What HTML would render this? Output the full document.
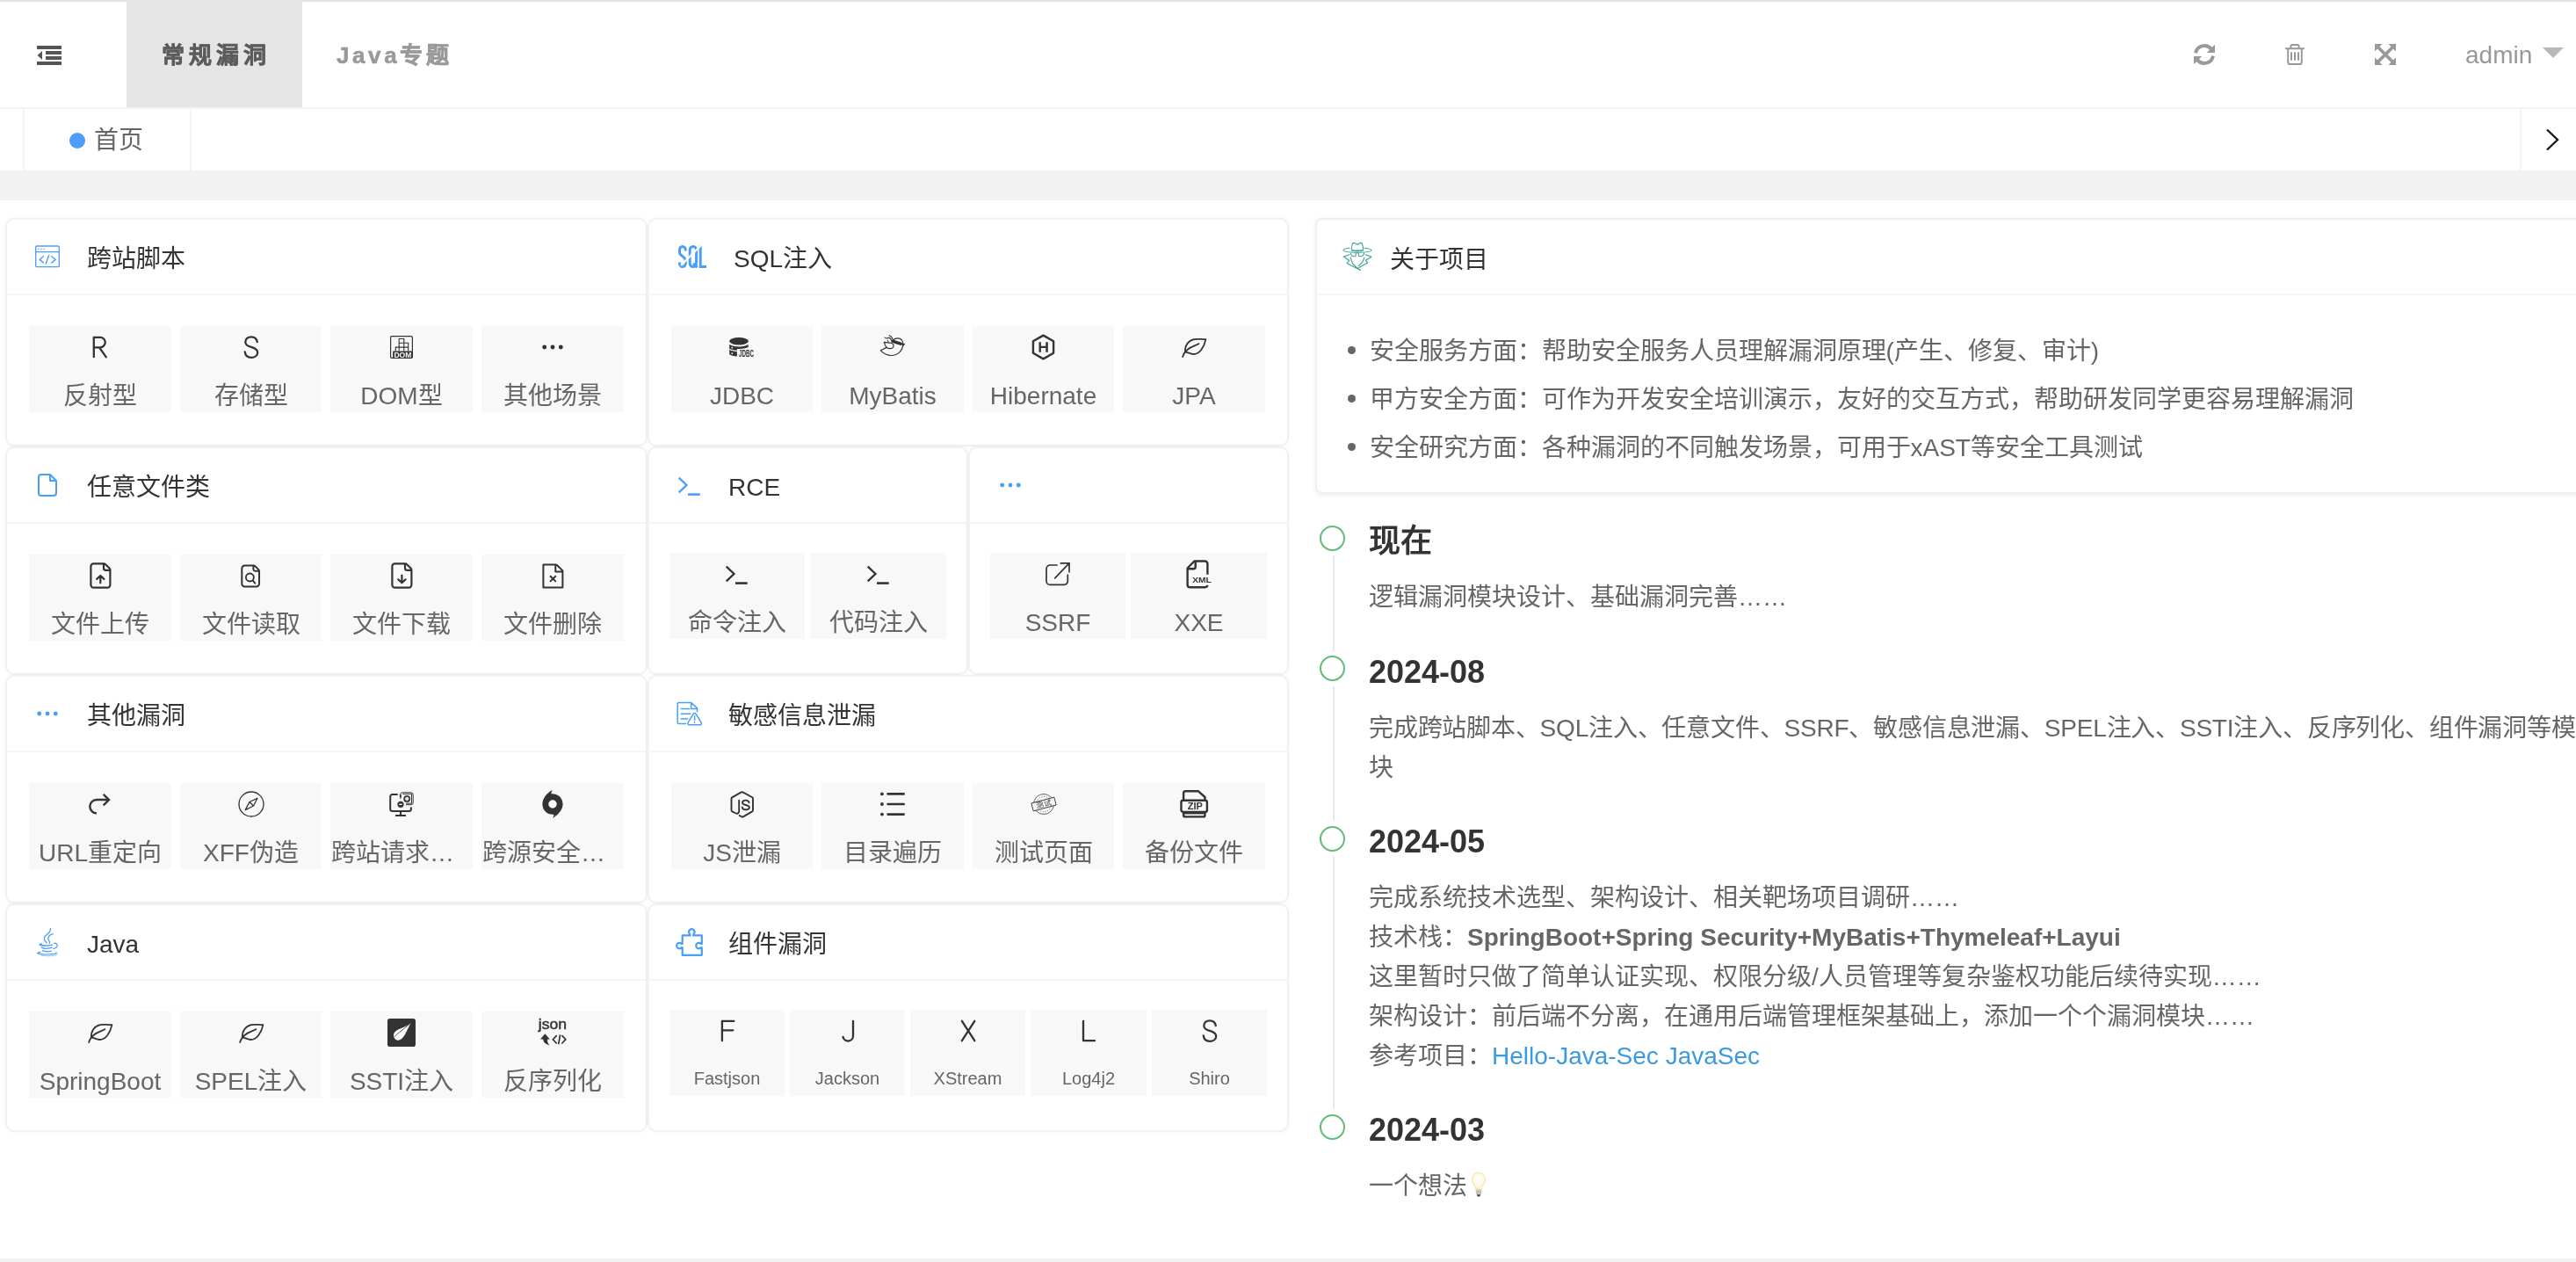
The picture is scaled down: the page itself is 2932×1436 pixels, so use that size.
<!DOCTYPE html>
<html lang="zh-CN">
<head>
<meta charset="utf-8">
<title>首页</title>
<style>
*{box-sizing:border-box;margin:0;padding:0}
html,body{width:2932px;height:1436px;overflow:hidden;background:#fff}
body{position:relative;font-family:"Liberation Sans",sans-serif;color:#666;font-size:28px;line-height:44.8px;-webkit-font-smoothing:antialiased}
#pg{position:absolute;left:0;top:0;width:2932px;height:1436px;overflow:hidden;will-change:transform}
.abs{position:absolute}
.ic{position:absolute;display:block;overflow:visible;fill:none;stroke:none}
.topline{left:0;top:0;width:2932px;height:2px;background:#e3e3e3}
.hdr{left:0;top:2px;width:2932px;height:120px;background:#fff}
.hdrline{left:0;top:122px;width:2932px;height:2px;background:#f4f4f4}
.navthis{left:144px;top:2px;width:200px;height:120px;background:#e5e5e5}
.nav{top:2px;height:120px;line-height:120px;font-size:26px;font-weight:bold;letter-spacing:4px;white-space:nowrap;-webkit-text-stroke:.55px currentColor}
.tabbar{left:0;top:124px;width:2932px;height:70px;background:#fff}
.vline{top:124px;width:2px;height:70px;background:#f4f4f4}
.band{left:0;top:194px;width:2932px;height:34px;background:#f2f2f2}
.foot{left:0;top:1432px;width:2932px;height:4px;background:#f2f2f2}
.card{position:absolute;background:#fff;border:2px solid #f1f1f1;border-radius:10px;box-shadow:0 0 6px rgba(0,0,0,.035)}
.card .hl{position:absolute;left:0;right:0;top:84px;height:2px;background:#f5f5f5}
.ttl{position:absolute;font-size:28px;line-height:44px;color:#333;white-space:nowrap}
.it{position:absolute;height:98px;background:#f8f8f8}
.lb{position:absolute;left:0;right:0;top:57.5px;height:44px;line-height:44px;text-align:center;font-size:28px;color:#666;white-space:nowrap;overflow:hidden}
.lb.sm{font-size:20px;top:55.5px}
.lb.l{text-align:left;padding-left:1px}
.ch{position:absolute;left:0;right:0;top:2px;height:44px;line-height:44px;text-align:center;font-size:34px;color:#333}
.about{left:1496.5px;top:248px;width:1500px;height:313.5px;border-radius:8px;border-color:#efefef;box-shadow:0 2px 7px rgba(0,0,0,.065)}
.li{position:absolute;left:1558.5px;height:54px;line-height:54px;font-size:28px;color:#666;white-space:nowrap}
.dot{position:absolute;left:1534px;width:9px;height:9px;border-radius:50%;background:#666}
.tl{position:absolute;left:1508px;top:592px;width:1500px}
.ti{position:relative;padding-bottom:40px}
.ti:before{content:"";position:absolute;left:9px;top:0;width:2px;height:100%;background:#e9e9e9}
.ti.last:before{display:none}
.ax{position:absolute;left:-11.5px;top:0;width:40px;height:40px;background:#fff}
.ax i{position:absolute;left:5.5px;top:5.5px;width:29px;height:29px;border:2px solid #62bb79;border-radius:50%}
.tc{padding-left:50px}
.tc h3{position:relative;top:2px;font-size:36px;line-height:44px;margin-bottom:20px;color:#333;font-weight:bold;white-space:nowrap}
.tc p{position:relative;top:2px;font-size:28px;line-height:44.8px;color:#666;white-space:nowrap}
.tc a{color:#3a9ae0;text-decoration:none}
.tc b{font-weight:bold}
</style>
</head>
<body>
<div id="pg">

<div class="abs topline"></div><div class="abs hdr"></div><div class="abs navthis"></div><div class="abs hdrline"></div>
<svg class="ic" style="left:42px;top:52px;width:28px;height:22px" viewBox="0 0 28 22"><path fill="#555" d="M0 0h28v4H0zM10 6h18v4H10zM10 12h18v4H10zM0 18h28v4H0zM0.6 11L6 6v10z"/></svg>
<div class="abs nav" style="left:184px;top:3px;letter-spacing:5px;color:#5c5c5c">常规漏洞</div>
<div class="abs nav" style="left:383px;top:3px;color:#999;letter-spacing:3.6px">Java专题</div>
<svg class="ic" style="left:2497.00px;top:50.00px;width:24.00px;height:24.00px;color:#999;" viewBox="0 0 24 24"><path fill="none" stroke="currentColor" stroke-width="4" d="M2.1 10.4A10 10 0 0 1 19.8 5.8"/><path fill="currentColor" stroke="none" d="M24 .8V10H14.8z"/><path fill="none" stroke="currentColor" stroke-width="4" d="M21.9 13.6A10 10 0 0 1 4.2 18.2"/><path fill="currentColor" stroke="none" d="M0 23.2V14H9.2z"/></svg>
<svg class="ic" style="left:2601.00px;top:50.00px;width:22.00px;height:24.00px;color:#999;" viewBox="0 0 22 24"><path fill="none" stroke="currentColor" stroke-width="2" d="M0 5.2H22M6.4 5V2.6Q6.4 1 8 1H14Q15.6 1 15.6 2.6V5M3.2 5.4V20.4Q3.2 23 5.8 23H16.2Q18.8 23 18.8 20.4V5.4M7 9.2V18.8M11 9.2V18.8M15 9.2V18.8"/></svg>
<svg class="ic" style="left:2703.00px;top:50.00px;width:24.00px;height:24.00px;color:#999;" viewBox="0 0 24 24"><path fill="currentColor" stroke="none" d="M0 0H8.6L0 8.6zM24 0V8.6L15.4 0zM0 24V15.4L8.6 24zM24 24H15.4L24 15.4z"/><path fill="none" stroke="currentColor" stroke-width="3.8" d="M3 3L21 21M21 3L3 21"/></svg>
<div class="abs" style="left:2806px;top:41px;height:44px;line-height:44px;font-size:28px;color:#999">admin</div>
<svg class="ic" style="left:2894px;top:54px;width:24px;height:12px" viewBox="0 0 24 12"><path fill="#b8b8b8" d="M0 0h24L12 12z"/></svg>
<div class="abs tabbar"></div><div class="abs vline" style="left:26px"></div><div class="abs vline" style="left:216px"></div><div class="abs vline" style="left:2868px"></div>
<div class="abs" style="left:79px;top:151px;width:18px;height:18px;border-radius:50%;background:#4a9ef7"></div>
<div class="abs" style="left:107px;top:138px;height:44px;line-height:44px;font-size:28px;color:#666;white-space:nowrap">首页</div>
<svg class="ic" style="left:2896px;top:146px;width:18px;height:26px" viewBox="0 0 18 26"><path d="M3 1.5L15 13L3 24.5" stroke="#1a1a1a" stroke-width="2.4" fill="none"/></svg>
<div class="abs band"></div><div class="abs foot"></div>
<div class="card" style="left:6px;top:248px;width:731px;height:260px"><div class="hl"></div></div>
<svg class="ic" style="left:40.00px;top:279.00px;width:28.00px;height:26.00px;color:#4a9ef7;" viewBox="0 0 28 26"><rect x=".7" y="1" width="26.6" height="23.6" rx="1.2" fill="none" stroke="currentColor" stroke-width="1.3"/><path fill="none" stroke="currentColor" stroke-width="1.3" d="M.7 7.7H27.3M3 4.4H4.4M6.2 4.4H7.6M9.4 4.4H10.8"/><path fill="none" stroke="currentColor" stroke-width="1.4" d="M9.8 12.2L5.2 16.4L9.8 20.4M15.9 11L11.9 21.7M18.3 12.2L23.1 16.4L18.3 20.4"/></svg>
<div class="ttl" style="left:99px;top:273px">跨站脚本</div>
<div class="it" style="left:33px;top:371px;width:162px">
<div class="lb">反射型</div></div>
<svg class="ic" style="left:105.00px;top:382.00px;width:18.00px;height:26.00px;color:#333;" viewBox="0 0 18 26"><path fill="none" stroke="currentColor" stroke-width="2.3" stroke-linecap="round" stroke-linejoin="round" d="M1.8 24.2V1.8H9A5.75 5.75 0 0 1 9 13.3H1.8M8.2 13.5L15.8 24.3"/></svg>
<div class="it" style="left:205px;top:371px;width:161px">
<div class="lb">存储型</div></div>
<svg class="ic" style="left:276.50px;top:382.00px;width:18.00px;height:26.00px;color:#333;" viewBox="0 0 18 26"><path fill="none" stroke="currentColor" stroke-width="2.3" stroke-linecap="round" stroke-linejoin="round" d="M15.8 7C15.2 3.5 12.7 1.3 9 1.3C5 1.3 2.3 3.8 2.3 7.2C2.3 10.5 5 11.8 8.8 12.9C13 14.1 16.2 15.3 16.2 18.9C16.2 22.5 13 24.8 9 24.8C5 24.8 2.2 22.3 1.8 18.3"/></svg>
<div class="it" style="left:376px;top:371px;width:162px">
<div class="lb">DOM型</div></div>
<svg class="ic" style="left:444.00px;top:382.00px;width:26.00px;height:26.00px;color:#333;" viewBox="0 0 26 26"><rect x=".6" y=".6" width="24.8" height="24.8" rx="1.3" fill="none" stroke="currentColor" stroke-width="1.2"/><path fill="currentColor" stroke="none" d="M3.2 17.5H25.4V25.4H3.2z"/><path fill="none" stroke="currentColor" stroke-width="1.1" d="M10.2 8.2V3.5H15.75V8.2M10.2 8.2H20.7V17.5M10.2 8.2V17.5M15.75 8.2V17.5M6.25 17.5V13.15H20.7"/><text x="14.4" y="24.7" text-anchor="middle" font-family="Liberation Sans,sans-serif" font-weight="bold" font-size="9.2" fill="#f8f8f8" textLength="20" lengthAdjust="spacingAndGlyphs">DOM</text></svg>
<div class="it" style="left:548px;top:371px;width:162px">
<div class="lb">其他场景</div></div>
<svg class="ic" style="left:617.00px;top:392.00px;width:24.00px;height:6.00px;color:#333;" viewBox="0 0 24 6"><circle cx="2.7" cy="3" r="2.45" fill="currentColor" stroke="none"/><circle cx="12" cy="3" r="2.45" fill="currentColor" stroke="none"/><circle cx="21.3" cy="3" r="2.45" fill="currentColor" stroke="none"/></svg>
<div class="card" style="left:737px;top:248px;width:730px;height:260px"><div class="hl"></div></div>
<svg class="ic" style="left:772.00px;top:279.00px;width:32.00px;height:26.00px;color:#4a9ef7;" viewBox="0 0 32 26"><path fill="none" stroke="currentColor" stroke-width="3" d="M8.3 6.6V5.2A3.4 3.7 0 0 0 1.5 5.2V8.2C1.5 12.2 8.3 13 8.3 17.6V20.8A3.4 3.7 0 0 1 1.5 20.8V19.4"/><path fill="none" stroke="currentColor" stroke-width="3" d="M13.2 5.3A3.7 3.8 0 0 1 20.6 5.3V20.7A3.7 3.8 0 0 1 13.2 20.7ZM17.2 20.6L21.6 25.2"/><path fill="none" stroke="currentColor" stroke-width="3" d="M25.2 0V24.4H32"/><path stroke="#fff" stroke-width="2.2" fill="none" d="M28.1 -2L3.1 23"/></svg>
<div class="ttl" style="left:835px;top:273px">SQL注入</div>
<div class="it" style="left:764px;top:371px;width:161px">
<div class="lb">JDBC</div></div>
<svg class="ic" style="left:830.30px;top:384.00px;width:28.40px;height:22.00px;color:#333;" viewBox="0 0 28.4 22"><ellipse cx="11" cy="4.2" rx="10.8" ry="4.2" fill="currentColor" stroke="none"/><path fill="currentColor" stroke="none" d="M.2 7.6C3 11.4 19 11.4 21.7 7.4V11C19.5 12.2 14 13 8.9 13.1V14.8C5 14.4 2 13.7 .2 12.7z"/><path fill="currentColor" stroke="none" d="M.2 14.1C2 15.2 5 15.9 8.9 16.3V21.6C5 21.2 2 20.3 .2 19.2z"/><rect x="2.5" y="10.8" width="1.6" height="1.6" fill="#f8f8f8"/><rect x="2.5" y="17.3" width="1.6" height="1.6" fill="#f8f8f8"/><text x="11" y="21.6" font-family="Liberation Sans,sans-serif" font-size="10.6" font-weight="bold" fill="currentColor" textLength="17.2" lengthAdjust="spacingAndGlyphs">JDBC</text></svg>
<div class="it" style="left:935px;top:371px;width:162px">
<div class="lb">MyBatis</div></div>
<svg class="ic" style="left:1002.00px;top:381.00px;width:28.00px;height:24.00px;color:#333;" viewBox="0 0 28 24"><path fill="none" stroke="currentColor" stroke-width="1.2" stroke-linejoin="round" stroke-linecap="round" d="M7.2 14.4L.4 17.8C3 20.5 7.5 23.4 12.5 23.5C20 23.5 25.8 17.5 25.8 10.2C25.8 6.5 23.5 3.8 20.1 3.8C17.5 3.8 15.5 4.8 14.4 6"/><path fill="none" stroke="currentColor" stroke-width="1.2" stroke-linejoin="round" stroke-linecap="round" d="M4.15 8.3C6 8.6 10 8.7 12.9 9.5C15 10.3 15.6 12.3 14.6 14.2C13.5 16 9.5 16 7.2 14.4C5.6 12.6 4.8 10.5 4.15 8.3Z"/><path fill="currentColor" stroke="none" d="M12.1 6.4L14.4 5.6L24.3 8.7L25.8 11L23.5 11.9L17.5 10.2L12.5 8.4z"/><path fill="none" stroke="currentColor" stroke-width="1.1" stroke-linecap="round" d="M10.2 .7C11 1.6 12.3 1.6 12.8 2.6C13.4 3.6 13.6 4.4 14 5.2M5.1 3C6 4 7.5 4.2 8.6 3.6C9.8 3.2 11 3.6 11.6 4.6C12 5.2 12.3 5.6 12.6 6M8.3 6.2C8.5 6.8 8.8 7.4 9.1 8M25.8 10.2L27.4 10.4L26.2 12.1"/></svg>
<div class="it" style="left:1107px;top:371px;width:161px">
<div class="lb">Hibernate</div></div>
<svg class="ic" style="left:1174.00px;top:380.00px;width:27.00px;height:30.00px;color:#333;" viewBox="0 0 27 30"><path fill="none" stroke="currentColor" stroke-width="2.4" stroke-linejoin="round" d="M13.5 1.6L25.1 8.2V21.8L13.5 28.4L1.9 21.8V8.2Z"/><path fill="currentColor" stroke="none" d="M8.5 9.25H10.9V13.8H16.3V9.25H18.8V20.85H16.3V16.1H10.9V20.85H8.5z"/></svg>
<div class="it" style="left:1278px;top:371px;width:162px">
<div class="lb">JPA</div></div>
<svg class="ic" style="left:1345.00px;top:385.00px;width:28.00px;height:22.00px;color:#333;" viewBox="0 0 28 22"><path fill="none" stroke="currentColor" stroke-width="1.8" stroke-linejoin="round" d="M27.4 1.1C22.5 1.3 18.5 .2 14 1.2C7.2 2.9 3.4 8.5 4 15.4C7 15.9 10 17.6 13.3 18C20.3 18 25.6 10.2 27.4 1.1Z"/><path fill="none" stroke="currentColor" stroke-width="1.8" d="M1 21.8C1.9 17.6 4.3 14.6 7 12.5C12 8.6 16 8.5 20 5.7"/></svg>
<div class="card" style="left:6px;top:508px;width:731px;height:260px"><div class="hl"></div></div>
<svg class="ic" style="left:43.00px;top:539.00px;width:22.00px;height:26.00px;color:#4a9ef7;" viewBox="0 0 22 26"><path fill="none" stroke="currentColor" stroke-width="2" stroke-linejoin="round" stroke-linecap="round" d="M14 1H4a3 3 0 0 0 -3 3V22a3 3 0 0 0 3 3H18a3 3 0 0 0 3 -3V8L14 1V8H21"/></svg>
<div class="ttl" style="left:99px;top:533px">任意文件类</div>
<div class="it" style="left:33px;top:631px;width:162px">
<div class="lb">文件上传</div></div>
<svg class="ic" style="left:101.50px;top:640.00px;width:25.00px;height:30.00px;color:#333;" viewBox="0 0 25 30"><path fill="none" stroke="currentColor" stroke-width="2.2" stroke-linejoin="round" stroke-linecap="round" d="M16 1.3H4.4a3 3 0 0 0 -3 3V25.6a3 3 0 0 0 3 3H20.4a3 3 0 0 0 3 -3V8.6a3 3 0 0 0 -.9 -2.1L18.1 2.2A3 3 0 0 0 16 1.3V6.4a2.4 2.4 0 0 0 2.4 2.4H23.3M12.3 23.3V15.4M8.2 18.9L12.3 15L16.4 18.9"/></svg>
<div class="it" style="left:205px;top:631px;width:161px">
<div class="lb">文件读取</div></div>
<svg class="ic" style="left:274.30px;top:641.50px;width:22.40px;height:27.00px;color:#333;" viewBox="0 0 22.4 27"><path fill="none" stroke="currentColor" stroke-width="2" stroke-linejoin="round" stroke-linecap="round" d="M14.4 1.5H4.6a3.3 3.3 0 0 0 -3.3 3.3V22.1a3.3 3.3 0 0 0 3.3 3.3H17.75a3.3 3.3 0 0 0 3.3 -3.3V8a3 3 0 0 0 -.9 -2.1L16.4 2.3A3 3 0 0 0 14.4 1.5V5.6a2.2 2.2 0 0 0 2.2 2.2H21"/><circle cx="10.4" cy="15" r="4.5" fill="none" stroke="currentColor" stroke-width="1.9"/><path fill="none" stroke="currentColor" stroke-width="1.9" stroke-linecap="round" d="M13.8 18.6L16.3 21.7"/></svg>
<div class="it" style="left:376px;top:631px;width:162px">
<div class="lb">文件下载</div></div>
<svg class="ic" style="left:444.50px;top:640.00px;width:25.00px;height:30.00px;color:#333;" viewBox="0 0 25 30"><path fill="none" stroke="currentColor" stroke-width="2.2" stroke-linejoin="round" stroke-linecap="round" d="M16 1.3H4.4a3 3 0 0 0 -3 3V25.6a3 3 0 0 0 3 3H20.4a3 3 0 0 0 3 -3V8.6a3 3 0 0 0 -.9 -2.1L18.1 2.2A3 3 0 0 0 16 1.3V6.4a2.4 2.4 0 0 0 2.4 2.4H23.3M12.4 14.5V23.2M8.2 19.3L12.4 23.3L16.6 19.3"/></svg>
<div class="it" style="left:548px;top:631px;width:162px">
<div class="lb">文件删除</div></div>
<svg class="ic" style="left:616.50px;top:640.50px;width:25.00px;height:29.00px;color:#333;" viewBox="0 0 25 29"><path fill="none" stroke="currentColor" stroke-width="2" stroke-linejoin="round" d="M16.4 1.5H1.4V27.4H23.4V8.4L16.4 1.5M15.3 1.5V9.5H23.4"/><path fill="none" stroke="currentColor" stroke-width="2" d="M9 14.3L15.8 20.9M15.8 14.3L9 20.9"/></svg>
<div class="card" style="left:737px;top:508px;width:365px;height:260px"><div class="hl"></div></div>
<svg class="ic" style="left:771.00px;top:542.00px;width:26.00px;height:22.00px;color:#4a9ef7;" viewBox="0 0 26 22"><path fill="none" stroke="currentColor" stroke-width="2.3" d="M1.7 1.6L10.5 10L1.7 18.3"/><rect x="12" y="19.3" width="13.7" height="2.6" fill="currentColor" stroke="none"/></svg>
<div class="ttl" style="left:829px;top:533px">RCE</div>
<div class="it" style="left:762px;top:629px;width:154px">
<div class="lb">命令注入</div></div>
<svg class="ic" style="left:825.00px;top:643.00px;width:26.00px;height:22.00px;color:#333;" viewBox="0 0 26 22"><path fill="none" stroke="currentColor" stroke-width="2.3" d="M1.7 1.6L10.5 10L1.7 18.3"/><rect x="12" y="19.3" width="13.7" height="2.6" fill="currentColor" stroke="none"/></svg>
<div class="it" style="left:922px;top:629px;width:155px">
<div class="lb">代码注入</div></div>
<svg class="ic" style="left:985.50px;top:643.00px;width:26.00px;height:22.00px;color:#333;" viewBox="0 0 26 22"><path fill="none" stroke="currentColor" stroke-width="2.3" d="M1.7 1.6L10.5 10L1.7 18.3"/><rect x="12" y="19.3" width="13.7" height="2.6" fill="currentColor" stroke="none"/></svg>
<div class="card" style="left:1102px;top:508px;width:365px;height:260px"><div class="hl"></div></div>
<svg class="ic" style="left:1137.70px;top:549.00px;width:24.00px;height:6.00px;color:#4a9ef7;" viewBox="0 0 24 6"><circle cx="2.7" cy="3" r="2.45" fill="currentColor" stroke="none"/><circle cx="12" cy="3" r="2.45" fill="currentColor" stroke="none"/><circle cx="21.3" cy="3" r="2.45" fill="currentColor" stroke="none"/></svg>
<div class="it" style="left:1127px;top:629px;width:154px">
<div class="lb">SSRF</div></div>
<svg class="ic" style="left:1190.00px;top:639.50px;width:28.00px;height:27.00px;color:#333;" viewBox="0 0 28 27"><path fill="none" stroke="currentColor" stroke-width="1.7" stroke-linecap="round" d="M13 3H5.2A4.2 4.2 0 0 0 1 7.2V21.2A4.2 4.2 0 0 0 5.2 25.4H21.1A4.2 4.2 0 0 0 25.3 21.2V14.2M10.7 17.8L27 .9M17.3 .9H27V10.8"/></svg>
<div class="it" style="left:1287px;top:629px;width:155px">
<div class="lb">XXE</div></div>
<svg class="ic" style="left:1350.00px;top:636.50px;width:29.00px;height:33.00px;color:#333;" viewBox="0 0 29 33"><path fill="none" stroke="currentColor" stroke-width="2.4" stroke-linejoin="round" d="M24.4 16.7V4.5A3 3 0 0 0 21.4 1.5H9.4L1.6 9.5V28.4A2.8 2.8 0 0 0 4.4 31.2H21.6A2.8 2.8 0 0 0 24.4 28.9M10.7 1.5V8A2.3 2.3 0 0 1 8.4 10.3H1.6"/><text x="7.2" y="26.2" font-family="Liberation Sans,sans-serif" font-weight="bold" font-size="8.8" fill="currentColor" textLength="21.6" lengthAdjust="spacingAndGlyphs">XML</text></svg>
<div class="card" style="left:6px;top:768px;width:731px;height:260px"><div class="hl"></div></div>
<svg class="ic" style="left:42.00px;top:809.00px;width:24.00px;height:6.00px;color:#4a9ef7;" viewBox="0 0 24 6"><circle cx="2.7" cy="3" r="2.45" fill="currentColor" stroke="none"/><circle cx="12" cy="3" r="2.45" fill="currentColor" stroke="none"/><circle cx="21.3" cy="3" r="2.45" fill="currentColor" stroke="none"/></svg>
<div class="ttl" style="left:99px;top:793px">其他漏洞</div>
<div class="it" style="left:33px;top:891px;width:162px">
<div class="lb">URL重定向</div></div>
<svg class="ic" style="left:101.00px;top:903.00px;width:25.00px;height:24.00px;color:#333;" viewBox="0 0 25 24"><path fill="none" stroke="currentColor" stroke-width="2.4" d="M16.7 .8L23 7L16.7 13.4M22.6 7H9A7.7 7.7 0 0 0 9 22.4"/></svg>
<div class="it" style="left:205px;top:891px;width:161px">
<div class="lb">XFF伪造</div></div>
<svg class="ic" style="left:270.50px;top:900.00px;width:30.00px;height:30.00px;color:#333;" viewBox="0 0 30 30"><circle cx="15" cy="15" r="14" fill="none" stroke="currentColor" stroke-width="1.3"/><path fill="none" stroke="currentColor" stroke-width="1.3" stroke-linejoin="round" d="M22 8.3L17.5 17L8.3 21.6L12.9 12.5ZM12.9 12.5L17.5 17"/></svg>
<div class="it" style="left:376px;top:891px;width:162px">
<div class="lb l">跨站请求…</div></div>
<svg class="ic" style="left:443.00px;top:901.00px;width:28.00px;height:28.00px;color:#333;" viewBox="0 0 28 28"><path fill="none" stroke="currentColor" stroke-width="2" d="M9.7 2.9H3.7A2.5 2.5 0 0 0 1.2 5.4V19.6A2.5 2.5 0 0 0 3.7 22.1H22.4A2.5 2.5 0 0 0 24.9 19.6V17.4M13 22.1V27M7 27.1H19"/><path fill="none" stroke="currentColor" stroke-width="1" d="M12.8 3V2.8A2 2 0 0 1 14.8 .8H24.9A2.3 2.3 0 0 1 27.2 3.1V12.4A2.3 2.3 0 0 1 24.9 14.7H19M15.2 2.4H25.5V13.2H19"/><path fill="currentColor" stroke="none" d="M11.9 3.2Q12.8 2.2 13.7 3.2L13.9 5.4L12.95 8.9L12 5.4z"/><circle cx="20.2" cy="7.9" r="3.2" fill="none" stroke="currentColor" stroke-width="1.5"/><circle cx="20.2" cy="7.9" r="2.6" fill="currentColor" stroke="none" opacity=".55"/><path stroke="#f8f8f8" fill="none" stroke-width="1.2" d="M20.2 5.9V9.9M18.2 7.9H22.2"/><circle cx="13" cy="14.3" r="3.6" fill="currentColor" stroke="none"/><ellipse cx="13" cy="14.3" rx="2.2" ry=".8" fill="#f8f8f8"/></svg>
<div class="it" style="left:548px;top:891px;width:162px">
<div class="lb l">跨源安全…</div></div>
<svg class="ic" style="left:617.00px;top:899.00px;width:24.00px;height:32.00px;color:#333;" viewBox="0 0 24 32"><path fill="currentColor" stroke="none" fill-rule="evenodd" d="M11.7 0L10.2 3.9L13.2 4.4C19.5 4.8 23.6 10 23.6 16C23.6 23 17.5 28.5 12.1 31.9L13.7 28.1L10.4 27.6C4.5 27 .4 22 .4 16C.4 9 6 3 11.7 0ZM12 11.25A4.75 4.75 0 1 0 12 20.75A4.75 4.75 0 1 0 12 11.25Z"/></svg>
<div class="card" style="left:737px;top:768px;width:730px;height:260px"><div class="hl"></div></div>
<svg class="ic" style="left:770.00px;top:798.00px;width:30.00px;height:28.00px;color:#4a9ef7;" viewBox="0 0 30 28"><path fill="none" stroke="currentColor" stroke-width="1.5" stroke-linejoin="round" stroke-linecap="round" d="M10.5 25.5H2.8a1.6 1.6 0 0 1 -1.6 -1.6V3a1.6 1.6 0 0 1 1.6 -1.6H16.6L23.5 7.9V11.7M16.6 1.4V8.4H23M5.2 8.4H14.5M5.2 14.3H15.7M5.2 20H12.6"/><path fill="none" stroke="currentColor" stroke-width="1.5" stroke-linejoin="round" stroke-linecap="round" d="M19.2 14.3a1.7 1.7 0 0 1 2.9 0L28.3 24.3a1.6 1.6 0 0 1 -1.4 2.4H14.4a1.6 1.6 0 0 1 -1.4 -2.4ZM20.65 16.8V21.6M20.65 23.7V24.3"/></svg>
<div class="ttl" style="left:829px;top:793px">敏感信息泄漏</div>
<div class="it" style="left:764px;top:891px;width:161px">
<div class="lb">JS泄漏</div></div>
<svg class="ic" style="left:830.50px;top:899.50px;width:28.00px;height:31.00px;color:#333;" viewBox="0 0 28 31"><path fill="none" stroke="currentColor" stroke-width="1.9" stroke-linejoin="round" stroke-linecap="round" d="M10.6 28L13.2 29.4A1.6 1.6 0 0 0 14.8 29.4L25.2 23.4A1.6 1.6 0 0 0 26 22V8.6A1.6 1.6 0 0 0 25.2 7.3L14.4 1.4A1.6 1.6 0 0 0 12.8 1.4L2.3 7.3A1.6 1.6 0 0 0 1.5 8.6V22A1.6 1.6 0 0 0 2.3 23.3L5.6 25C8 26.4 10.2 25.6 10.2 23V10.7"/><path fill="none" stroke="currentColor" stroke-width="1.9" stroke-linecap="round" d="M21.6 13.4C21.2 11.3 19.6 10.6 17.8 10.6C15.5 10.6 14 11.6 14 13.2C14 15 15.6 15.5 17.8 16C20.5 16.6 21.9 17.3 21.9 18.8C21.9 20.5 20 21.3 17.9 21.3C15.5 21.3 14 20.3 13.8 18.4"/></svg>
<div class="it" style="left:935px;top:891px;width:162px">
<div class="lb">目录遍历</div></div>
<svg class="ic" style="left:1002.00px;top:901.00px;width:28.00px;height:28.00px;color:#333;" viewBox="0 0 28 28"><circle cx="1.9" cy="2.4" r="1.9" fill="currentColor" stroke="none"/><circle cx="1.9" cy="14" r="1.9" fill="currentColor" stroke="none"/><circle cx="1.9" cy="25.6" r="1.9" fill="currentColor" stroke="none"/><path fill="none" stroke="currentColor" stroke-width="2.6" stroke-linecap="round" d="M8.55 2.4H26.7M8.55 14H26.7M8.55 25.6H26.7"/></svg>
<div class="it" style="left:1107px;top:891px;width:161px">
<div class="lb">测试页面</div></div>
<svg class="ic" style="left:1173.50px;top:903.00px;width:28.00px;height:24.00px;color:#333;" viewBox="0 0 28 24"><circle cx="14" cy="12" r="11.5" fill="none" stroke="currentColor" stroke-width=".9" opacity=".85"/><circle cx="14" cy="12" r="8.6" fill="none" stroke="currentColor" stroke-width="1" stroke-dasharray="1 1.7" opacity=".7"/><g transform="rotate(-15 14 12)"><rect x=".6" y="7.4" width="26.8" height="9.2" fill="#f8f8f8" stroke="currentColor" stroke-width=".9" opacity=".95"/><text x="14" y="15.1" text-anchor="middle" font-family="Liberation Sans,sans-serif" font-size="8.6" fill="currentColor" textLength="18" lengthAdjust="spacingAndGlyphs">测试</text></g></svg>
<div class="it" style="left:1278px;top:891px;width:162px">
<div class="lb">备份文件</div></div>
<svg class="ic" style="left:1343.00px;top:899.00px;width:32.00px;height:32.00px;color:#333;" viewBox="0 0 32 32"><path fill="none" stroke="currentColor" stroke-width="2.4" stroke-linejoin="round" d="M4.1 11.8V3.3A2 2 0 0 1 6.1 1.3H21L28.45 8V11.8M4.1 24.9V28.4A2 2 0 0 0 6.1 30.4H26.45A2 2 0 0 0 28.45 28.4V24.9"/><rect x="1.45" y="11.8" width="29.45" height="13.1" rx="2.2" fill="none" stroke="currentColor" stroke-width="2.4"/><path fill="none" stroke="currentColor" stroke-width="1.6" d="M5 26.6H27.6"/><text x="17.3" y="22.4" text-anchor="middle" font-family="Liberation Sans,sans-serif" font-weight="bold" font-size="10" fill="currentColor" textLength="17" lengthAdjust="spacingAndGlyphs">ZIP</text></svg>
<div class="card" style="left:6px;top:1028px;width:731px;height:260px"><div class="hl"></div></div>
<svg class="ic" style="left:42.00px;top:1056.00px;width:24.00px;height:32.00px;color:#4a9ef7;" viewBox="0 0 24 32"><path fill="none" stroke="currentColor" stroke-width="1.3" stroke-linecap="round" d="M15.4 .3C16.2 4 13 6 10.6 8C8 10.3 7.6 12.2 9.1 14.4C9.8 15.4 10.6 16.1 11.3 16.7M18.2 6.6C15.5 7.4 13.2 8.8 12.7 11.4C12.4 13.4 15.8 15.2 14.2 17.5"/><path fill="none" stroke="currentColor" stroke-width="1.3" stroke-linecap="round" d="M5.5 18C2.6 18.6 2.4 19.5 4.5 19.5C8 20.2 14 19.9 17.6 19.1M19.7 17.3C22.6 16.8 24.6 19.6 22.4 21.6C21.4 22.6 20.2 23.2 19 23.6M5.3 22.1C7.5 23.7 14 23.6 17.1 22.2M6.4 25.4C8.5 27.1 13.8 27 16.3 26.1"/><path fill="none" stroke="currentColor" stroke-width="1.2" stroke-linecap="round" d="M4.1 27.3C.5 27.8 -.5 28.9 2.5 29.4C8 30.2 15 30 20 29.4C21.6 29.1 22.4 28.5 22.2 27.9"/><path fill="none" stroke="currentColor" stroke-width="1" stroke-linecap="round" opacity=".6" d="M5 31.3C10 31.9 16 31.8 19.4 31.4C21.6 31 23.2 30.3 23.4 29.4"/></svg>
<div class="ttl" style="left:99px;top:1053px">Java</div>
<div class="it" style="left:33px;top:1151px;width:162px">
<div class="lb">SpringBoot</div></div>
<svg class="ic" style="left:100.00px;top:1165.00px;width:28.00px;height:22.00px;color:#333;" viewBox="0 0 28 22"><path fill="none" stroke="currentColor" stroke-width="1.8" stroke-linejoin="round" d="M27.4 1.1C22.5 1.3 18.5 .2 14 1.2C7.2 2.9 3.4 8.5 4 15.4C7 15.9 10 17.6 13.3 18C20.3 18 25.6 10.2 27.4 1.1Z"/><path fill="none" stroke="currentColor" stroke-width="1.8" d="M1 21.8C1.9 17.6 4.3 14.6 7 12.5C12 8.6 16 8.5 20 5.7"/></svg>
<div class="it" style="left:205px;top:1151px;width:161px">
<div class="lb">SPEL注入</div></div>
<svg class="ic" style="left:271.50px;top:1165.00px;width:28.00px;height:22.00px;color:#333;" viewBox="0 0 28 22"><path fill="none" stroke="currentColor" stroke-width="1.8" stroke-linejoin="round" d="M27.4 1.1C22.5 1.3 18.5 .2 14 1.2C7.2 2.9 3.4 8.5 4 15.4C7 15.9 10 17.6 13.3 18C20.3 18 25.6 10.2 27.4 1.1Z"/><path fill="none" stroke="currentColor" stroke-width="1.8" d="M1 21.8C1.9 17.6 4.3 14.6 7 12.5C12 8.6 16 8.5 20 5.7"/></svg>
<div class="it" style="left:376px;top:1151px;width:162px">
<div class="lb">SSTI注入</div></div>
<svg class="ic" style="left:441.00px;top:1159.00px;width:32.00px;height:32.00px;color:#333;" viewBox="0 0 32 32"><rect x="0" y="0" width="32" height="32" rx="2.8" fill="currentColor" stroke="none"/><path fill="#fbfbfb" d="M26.7 5.1C23 8 20 9.3 17.6 10.25C14 11.6 11 12.6 8.6 15C6.6 17.2 6.4 20.4 8.1 22.6C9.4 24.3 11 24.9 12.6 24.7C14.6 24.3 16 23.2 17.2 22C19.5 19.5 20.6 17 21.8 14.6C23.3 11.6 25 8 26.7 5.1Z"/><path stroke="currentColor" stroke-width=".8" fill="none" d="M7.7 20.9C12 16.5 19 11.5 26.7 5.1"/></svg>
<div class="it" style="left:548px;top:1151px;width:162px">
<div class="lb">反序列化</div></div>
<svg class="ic" style="left:613.00px;top:1159.00px;width:32.00px;height:31.00px;color:#333;" viewBox="0 0 32 31"><text x="-.3" y="11.6" font-family="Liberation Sans,sans-serif" font-size="16.4" stroke="currentColor" stroke-width=".45" fill="currentColor" textLength="32.4" lengthAdjust="spacingAndGlyphs">json</text><path fill="currentColor" stroke="none" d="M7.35 17.2L2 23.6H5.2C5.4 27 8 29.4 12.4 30.4C10.6 28.6 9.8 26.4 10.2 23.6H12.8z"/><path fill="none" stroke="currentColor" stroke-width="1.7" d="M20.7 19.2L16.4 23.75L20.7 28.5M24.5 18.4L22.75 29.1M26.4 19.2L30.8 23.75L26.4 28.5"/></svg>
<div class="card" style="left:737px;top:1028px;width:730px;height:260px"><div class="hl"></div></div>
<svg class="ic" style="left:769.00px;top:1056.00px;width:31.00px;height:32.00px;color:#4a9ef7;" viewBox="0 0 31 32"><path fill="none" stroke="currentColor" stroke-width="2.2" stroke-linejoin="round" stroke-linecap="round" d="M7.7 17.9V8.35H16.6L15.8 6.5A3.2 3.2 0 1 1 20.8 6.5L20 8.35H29.8V17.9L28.9 18.1A3.2 3.2 0 1 0 28.9 22.1L29.8 22.3V30.8H7.7V22.3L6.8 22.1A3.2 3.2 0 1 1 6.8 18.1Z"/></svg>
<div class="ttl" style="left:829px;top:1053px">组件漏洞</div>
<div class="it" style="left:762px;top:1149px;width:131px">
<div class="lb sm">Fastjson</div></div>
<svg class="ic" style="left:818.50px;top:1160.00px;width:18.00px;height:26.00px;color:#333;" viewBox="0 0 18 26"><path fill="none" stroke="currentColor" stroke-width="2.3" stroke-linecap="round" stroke-linejoin="round" d="M16.4 1.8H2.9V24.2M2.9 12.3H15.3"/></svg>
<div class="it" style="left:899px;top:1149px;width:131px">
<div class="lb sm">Jackson</div></div>
<svg class="ic" style="left:955.50px;top:1160.00px;width:18.00px;height:26.00px;color:#333;" viewBox="0 0 18 26"><path fill="none" stroke="currentColor" stroke-width="2.3" stroke-linecap="round" stroke-linejoin="round" d="M15 1.8V18.6A5.8 5.8 0 0 1 3.5 19.8"/></svg>
<div class="it" style="left:1036px;top:1149px;width:131px">
<div class="lb sm">XStream</div></div>
<svg class="ic" style="left:1092.50px;top:1160.00px;width:18.00px;height:26.00px;color:#333;" viewBox="0 0 18 26"><path fill="none" stroke="currentColor" stroke-width="2.3" stroke-linecap="round" stroke-linejoin="round" d="M1.9 1.8L16.3 24.2M16.3 1.8L1.9 24.2"/></svg>
<div class="it" style="left:1173px;top:1149px;width:132px">
<div class="lb sm">Log4j2</div></div>
<svg class="ic" style="left:1230.00px;top:1160.00px;width:18.00px;height:26.00px;color:#333;" viewBox="0 0 18 26"><path fill="none" stroke="currentColor" stroke-width="2.3" stroke-linecap="round" stroke-linejoin="round" d="M3 1.8V24.2H16"/></svg>
<div class="it" style="left:1311px;top:1149px;width:131px">
<div class="lb sm">Shiro</div></div>
<svg class="ic" style="left:1367.50px;top:1160.00px;width:18.00px;height:26.00px;color:#333;" viewBox="0 0 18 26"><path fill="none" stroke="currentColor" stroke-width="2.3" stroke-linecap="round" stroke-linejoin="round" d="M15.8 7C15.2 3.5 12.7 1.3 9 1.3C5 1.3 2.3 3.8 2.3 7.2C2.3 10.5 5 11.8 8.8 12.9C13 14.1 16.2 15.3 16.2 18.9C16.2 22.5 13 24.8 9 24.8C5 24.8 2.2 22.3 1.8 18.3"/></svg>
<div class="card about"><div class="hl"></div></div>
<svg class="ic" style="left:1529.00px;top:276.00px;width:32.00px;height:32.00px;color:#3f9f94;" viewBox="0 0 32 32"><path fill="none" stroke="currentColor" stroke-width="1.1" stroke-linejoin="round" stroke-linecap="round" d="M9.25 8.35C9.6 5 9.8 2.6 10.4 1.2C10.9 .2 12 .2 13 .7C14 1.2 15 2.1 15.9 2.1C16.8 2.1 17.8 1.2 18.8 .7C19.8 .2 20.9 .2 21.4 1.2C22 2.6 22.4 5 22.75 8.35M7 6.3C3 6.7 .1 7.5 .1 8.7C.1 10.2 7 11.2 15.9 11.2C24.8 11.2 31.9 10.2 31.9 8.7C31.9 7.5 28 6.7 24.1 6.3"/><path fill="none" stroke="currentColor" stroke-width="1.6" d="M9.2 8.7C13 9.4 19 9.4 22.8 8.7"/><path fill="none" stroke="currentColor" stroke-width="1.1" stroke-linejoin="round" stroke-linecap="round" d="M8.3 12.15C8.4 13.6 8.8 14.6 9.8 15.1C11 15.7 12.8 15.8 13.6 15.4C14.3 15 14.3 13.4 14.2 11.8H17.2C17.2 13.4 17.2 15 17.9 15.4C18.8 15.8 20.8 15.7 22 15.1C23 14.6 23.4 13.6 23.5 12.15"/><path fill="none" stroke="currentColor" stroke-width="1.1" stroke-linejoin="round" stroke-linecap="round" d="M6.8 13.7L.3 16L6.6 20.3L4.1 23.4L19.5 31.5C17.5 30 16.3 29.3 15.3 28.5C11.5 25.5 8.8 21.5 8.3 17.1M25.2 13.7L31.9 16.3L25.4 20.3L27.7 23L17.6 28.5M23.7 17.1C23.2 20.8 20.6 24 17.2 26.6"/></svg>
<div class="ttl" style="left:1582px;top:273.5px">关于项目</div>
<div class="dot" style="top:394.0px"></div><div class="li" style="top:373.0px">安全服务方面：帮助安全服务人员理解漏洞原理(产生、修复、审计)</div>
<div class="dot" style="top:448.8px"></div><div class="li" style="top:427.8px">甲方安全方面：可作为开发安全培训演示，友好的交互方式，帮助研发同学更容易理解漏洞</div>
<div class="dot" style="top:503.6px"></div><div class="li" style="top:482.6px">安全研究方面：各种漏洞的不同触发场景，可用于xAST等安全工具测试</div>
<div class="tl">
<div class="ti"><div class="ax"><i></i></div><div class="tc"><h3>现在</h3><p>逻辑漏洞模块设计、基础漏洞完善……</p></div></div>
<div class="ti"><div class="ax"><i></i></div><div class="tc"><h3>2024-08</h3><p style="letter-spacing:-0.2px">完成跨站脚本、SQL注入、任意文件、SSRF、敏感信息泄漏、SPEL注入、SSTI注入、反序列化、组件漏洞等模<br>块</p></div></div>
<div class="ti"><div class="ax"><i></i></div><div class="tc"><h3>2024-05</h3><p>完成系统技术选型、架构设计、相关靶场项目调研……<br>技术栈：<b>SpringBoot+Spring Security+MyBatis+Thymeleaf+Layui</b><br>这里暂时只做了简单认证实现、权限分级/人员管理等复杂鉴权功能后续待实现……<br>架构设计：前后端不分离，在通用后端管理框架基础上，添加一个个漏洞模块……<br>参考项目：<a>Hello-Java-Sec</a> <a>JavaSec</a></p></div></div>
<div class="ti last"><div class="ax"><i></i></div><div class="tc"><h3>2024-03</h3><p>一个想法</p></div></div>
</div>
<svg class="ic" style="left:1674.50px;top:1334.00px;width:16.00px;height:28.00px;" viewBox="0 0 16 28"><defs><radialGradient id="bg" cx="50%" cy="38%" r="62%"><stop offset="0" stop-color="#ffffff"/><stop offset=".55" stop-color="#fffbea"/><stop offset="1" stop-color="#fbeeb4"/></radialGradient></defs><path fill="url(#bg)" stroke="#f6df8a" stroke-width=".9" d="M8 .5C3.8 .5 .5 3.8 .5 8C.5 11 2.1 13 3.3 15C4.3 16.6 4.7 18 4.8 19.4H11.2C11.3 18 11.7 16.6 12.7 15C13.9 13 15.5 11 15.5 8C15.5 3.8 12.2 .5 8 .5Z"/><path fill="#cfccc6" d="M4.8 19.6H11.2V24.2Q11.2 25.2 10.2 25.2H5.8Q4.8 25.2 4.8 24.2z"/><path fill="#b3b0aa" d="M4.8 21.2H11.2V22H4.8zM4.8 23.2H11.2V24H4.8z"/><path fill="#3a3a3a" d="M5.8 25.2H10.2L9.2 27.4H6.8z"/></svg>
</div>
</body></html>
